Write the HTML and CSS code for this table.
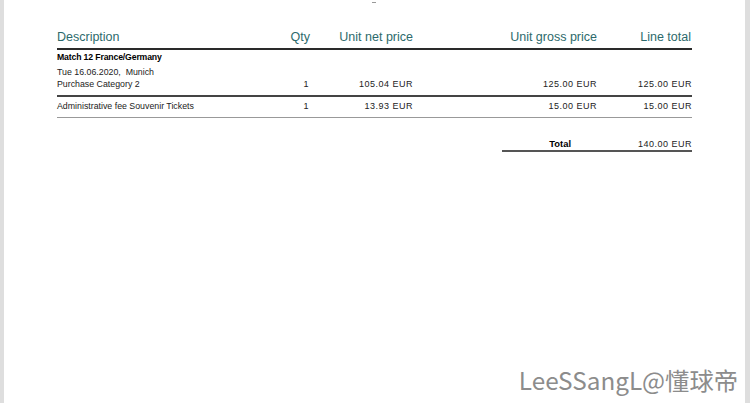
FILE: index.html
```html
<!DOCTYPE html>
<html>
<head>
<meta charset="utf-8">
<link rel="stylesheet" href="styles.css">
</head>
<body>
<div class="page">
  <div class="topmark"></div>
  <div class="table">
    <div class="row head">
      <div class="c desc">Description</div>
      <div class="c num">Qty</div>
      <div class="c num">Unit net price</div>
      <div class="c num">Unit gross price</div>
      <div class="c num">Line total</div>
    </div>
    <div class="item first">
      <div class="title">Match 12 France/Germany</div>
      <div class="row small">
        <div class="c desc">Tue 16.06.2020,&nbsp; Munich</div>
      </div>
      <div class="row small">
        <div class="c desc">Purchase Category 2</div>
        <div class="c num">1</div>
        <div class="c num">105.04 EUR</div>
        <div class="c num">125.00 EUR</div>
        <div class="c num">125.00 EUR</div>
      </div>
    </div>
    <div class="item second">
      <div class="row small">
        <div class="c desc">Administrative fee Souvenir Tickets</div>
        <div class="c num">1</div>
        <div class="c num">13.93 EUR</div>
        <div class="c num">15.00 EUR</div>
        <div class="c num">15.00 EUR</div>
      </div>
    </div>
    <div class="totals">
      <div class="total-label">Total</div>
      <div class="total-value">140.00 EUR</div>
    </div>
  </div>
  <div class="watermark">LeeSSangL@懂球帝</div>
</div>
</body>
</html>
```

FILE: styles.css
```css
html, body {
  margin: 0;
  padding: 0;
  background: #ffffff;
}
body {
  font-family: "Liberation Sans", Arial, sans-serif;
  color: #222;
}
.page {
  position: relative;
  height: 403px;
  box-sizing: border-box;
  border-left: 4px solid #dedede;
  border-right: 5px solid #dedede;
  padding: 28px 53px 0 53px;
  background: #fff;
}
.topmark {
  position: absolute;
  left: 368px;
  top: 2px;
  width: 4px;
  height: 1px;
  background: #999;
}
.row {
  display: grid;
  grid-template-columns: 193px 60px 103px 184px 95px;
}
.c.num {
  text-align: right;
}
.head {
  font-size: 12.5px;
  color: #2d6a6c;
  height: 20px;
  line-height: 18px;
  border-bottom: 2px solid #2a2a2a;
}
.head .c.num:nth-child(5) { padding-right: 1px; }
.item {
  border-bottom: 2px solid #444;
}
.first {
  padding-top: 2px;
  padding-bottom: 5px;
}
.second {
  border-bottom: 1px solid #999;
  padding-top: 3px;
  padding-bottom: 5px;
}
.title {
  font-weight: bold;
  font-size: 8.7px;
  line-height: 11px;
  color: #000;
  margin-bottom: 3px;
  letter-spacing: -0.15px;
}
.small {
  font-size: 8.8px;
  line-height: 12px;
  color: #222;
}
.small .c.num {
  font-size: 9px;
  letter-spacing: 0.5px;
}
.small .c.num:nth-child(2) { padding-right: 1px; }
.small .c.num:nth-child(5) { padding-right: 0; }
.totals {
  margin-left: 445px;
  margin-top: 20px;
  width: 190px;
  display: grid;
  grid-template-columns: 95px 95px;
  font-size: 9px;
  line-height: 12px;
  border-bottom: 2px solid #555;
  padding-bottom: 0;
}
.total-label {
  font-weight: bold;
  font-size: 9.4px;
  color: #000;
  text-align: right;
  padding-right: 26px;
}
.total-value {
  text-align: right;
  letter-spacing: 0.5px;
}
.watermark {
  position: absolute;
  right: 7px;
  bottom: 8px;
  font-family: "Noto Sans CJK SC", "Noto Sans", sans-serif;
  font-size: 24.3px;
  line-height: 30px;
  color: #8c8c8c;
}
```
